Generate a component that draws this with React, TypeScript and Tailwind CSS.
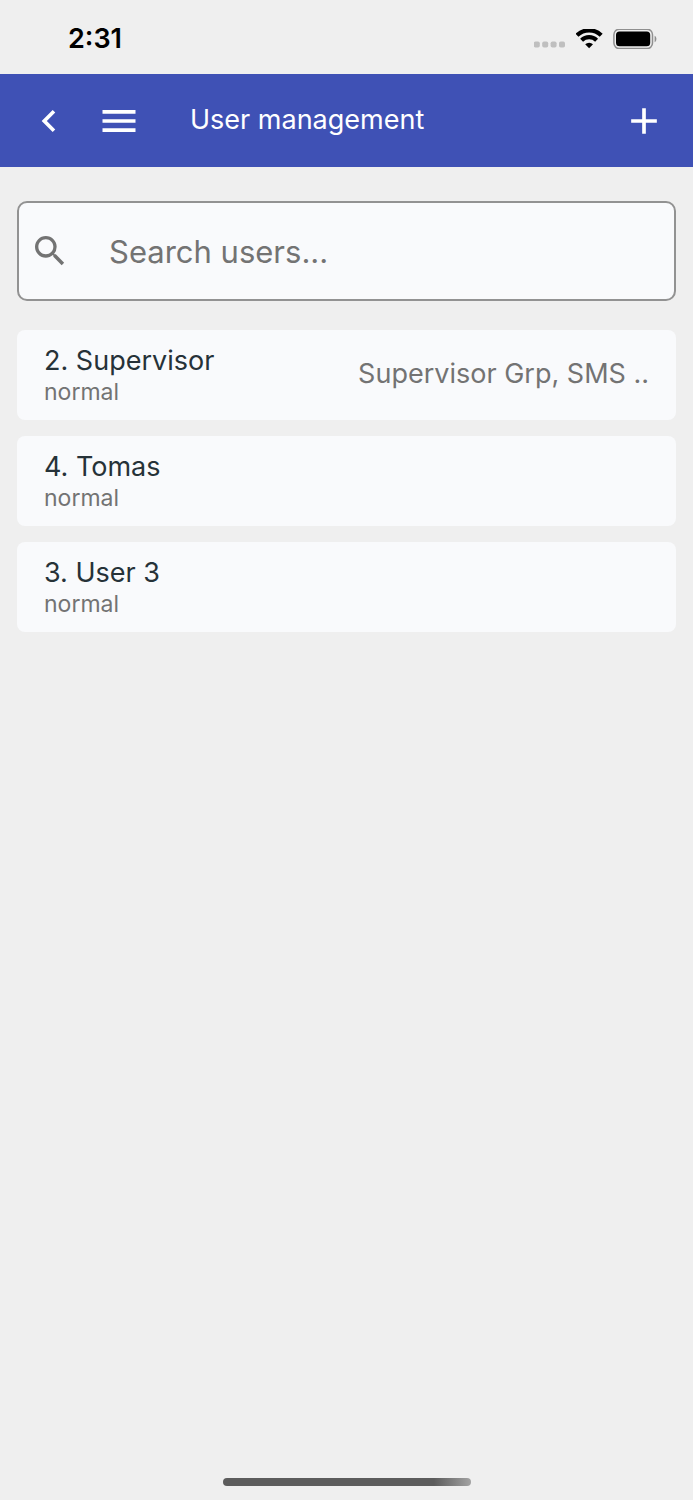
import { useState } from 'react';
import { MdAdd, MdChevronLeft, MdMenu, MdSearch } from 'react-icons/md';

interface User {
  id: number;
  name: string;
  role: string;
  groups?: string;
}

const users: User[] = [
  { id: 2, name: 'Supervisor', role: 'normal', groups: 'Supervisor Grp, SMS ..' },
  { id: 4, name: 'Tomas', role: 'normal' },
  { id: 3, name: 'User 3', role: 'normal' },
];

function StatusBar() {
  return (
    <div className="flex h-[74px] items-center justify-between pl-[68px] pr-9 pt-1 text-black">
      <span className="text-[27px] font-semibold leading-8">2:31</span>
      <div className="flex items-center gap-2.5">
        <svg width="32" height="20" viewBox="0 0 32 20" fill="#bfbfbf" aria-hidden="true">
          <rect x="-0.2" y="12.5" width="6" height="6" rx="1.8" />
          <rect x="8.2" y="12.5" width="6" height="6" rx="1.8" />
          <rect x="16.6" y="12.5" width="6" height="6" rx="1.8" />
          <rect x="25" y="12.5" width="6" height="6" rx="1.8" />
        </svg>
        <svg width="27" height="20" viewBox="0 0 27 20" fill="none" stroke="currentColor" aria-hidden="true">
          <path d="M1 6.2a17.4 17.4 0 0 1 24.2 0" strokeWidth="4.2" />
          <path d="M5.6 11.2a10.8 10.8 0 0 1 15 0" strokeWidth="4.2" />
          <path d="M13.1 19.2 9.2 15.3a5.6 5.6 0 0 1 7.8 0z" fill="currentColor" stroke="none" />
        </svg>
        <svg width="44" height="20" viewBox="0 0 44 20" aria-hidden="true">
          <rect x="0.9" y="0.2" width="38.6" height="19.4" rx="5.5" fill="none" stroke="#8f8f8f" strokeWidth="1.5" />
          <rect x="3" y="2.6" width="34.2" height="14.6" rx="3.5" fill="currentColor" />
          <path d="M41.6 6.8c2.4 1 2.4 5.4 0 6.4z" fill="#8f8f8f" />
        </svg>
      </div>
    </div>
  );
}

function UserCard({ user }: { user: User }) {
  return (
    <li className="flex h-[90px] items-center justify-between rounded-lg bg-[#f9fafc] px-[27px]">
      <div className="pt-0.5">
        <p className="text-[27px] leading-8 text-[#263238]">
          {user.id}. {user.name}
        </p>
        <p className="text-[23px] leading-[30px] text-[#737373]">{user.role}</p>
      </div>
      {user.groups && <p className="pb-0.5 text-[27px] leading-8 text-[#737373]">{user.groups}</p>}
    </li>
  );
}

export default function App() {
  const [query, setQuery] = useState('');

  const visible = users.filter((u) => u.name.toLowerCase().includes(query.toLowerCase()));

  return (
    <div className="flex min-h-screen flex-col bg-[#efefef] font-['Inter','Liberation_Sans',sans-serif]">
      <StatusBar />

      <header className="flex h-[93px] items-center bg-[#3f51b5] px-[27px] text-white">
        <button aria-label="Back">
          <MdChevronLeft size={44} />
        </button>
        <button aria-label="Menu" className="ml-[26px]">
          <MdMenu size={44} />
        </button>
        <h1 className="ml-[49px] flex-1 pb-0.5 text-[27px] leading-8">User management</h1>
        <button aria-label="Add user">
          <MdAdd size={44} />
        </button>
      </header>

      <main className="flex-1 px-[17px] pt-[34px]">
        <label className="flex h-[100px] items-center gap-[39px] rounded-[10px] border-2 border-[#929292] bg-[#f9fafc] px-[11px] text-[#737373]">
          <MdSearch size={40} className="shrink-0" />
          <input
            type="text"
            value={query}
            onChange={(e) => setQuery(e.target.value)}
            placeholder="Search users..."
            aria-label="Search users"
            className="min-w-0 flex-1 pt-0.5 text-[31px] text-[#263238] outline-none placeholder:text-[#737373]"
          />
        </label>

        <ul className="mt-[29px] flex flex-col gap-4">
          {visible.map((user) => (
            <UserCard key={user.id} user={user} />
          ))}
        </ul>
      </main>

      {/* home indicator */}
      <div className="flex justify-center pb-3.5">
        <div className="h-2 w-[248px] rounded-full bg-linear-to-r from-[#5c5c5c] from-85% to-[#a3a3a3]" />
      </div>
    </div>
  );
}
